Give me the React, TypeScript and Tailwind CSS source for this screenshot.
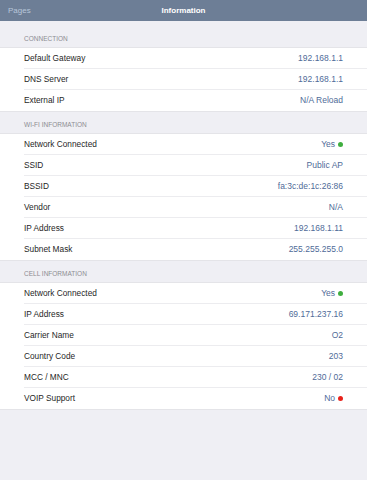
const sections = [
    {
        title: "CONNECTION",
        header: "h-[27px]",
        rows: [
            {label: "Default Gateway", value: "192.168.1.1"},
            {label: "DNS Server", value: "192.168.1.1"},
            {label: "External IP", value: "N/A Reload"},
        ],
    },
    {
        title: "WI-FI INFORMATION",
        header: "h-[22px]",
        rows: [
            {label: "Network Connected", value: "Yes", dot: "green"},
            {label: "SSID", value: "Public AP"},
            {label: "BSSID", value: "fa:3c:de:1c:26:86"},
            {label: "Vendor", value: "N/A"},
            {label: "IP Address", value: "192.168.1.11"},
            {label: "Subnet Mask", value: "255.255.255.0"},
        ],
    },
    {
        title: "CELL INFORMATION",
        header: "h-[22px]",
        rows: [
            {label: "Network Connected", value: "Yes", dot: "green"},
            {label: "IP Address", value: "69.171.237.16"},
            {label: "Carrier Name", value: "O2"},
            {label: "Country Code", value: "203"},
            {label: "MCC / MNC", value: "230 / 02"},
            {label: "VOIP Support", value: "No", dot: "red"},
        ],
    },
];

export default function App() {
    return (
        <div className="w-[367px] h-[480px] bg-[#efeff4] font-['Liberation_Sans',Arial,sans-serif] overflow-hidden">
            <nav className="h-[21px] bg-[#6d7e96] flex items-center relative">
                <span className="pl-2 text-[8px] text-[#b8c6da]">Pages</span>
                <span className="absolute left-0 right-0 text-center text-[8px] font-bold text-white">Information</span>
            </nav>

            {sections.map((section) => (
                <section key={section.title}>
                    <div className={`${section.header} flex items-end pl-6 pb-[3px] border-b border-[#e4e4e8]`}>
                        <span className="text-[6.5px] text-[#8d8d92]">{section.title}</span>
                    </div>
                    <div className="bg-white border-b border-[#e4e4e8]">
                        {section.rows.map((row, i) => (
                            <div key={i} className="pl-6">
                                <div className={`h-[21px] flex items-center justify-between pr-6 ${i < section.rows.length - 1 ? "border-b border-[#ececef]" : ""}`}>
                                    <span className="text-[8.3px] text-[#1f1f1f]">{row.label}</span>
                                    <span className="flex items-center gap-[3px] text-[8.5px] text-[#4f6b98]">
                                        {row.value}
                                        {row.dot && (
                                            <span className={`w-[5px] h-[5px] rounded-full ${row.dot === "green" ? "bg-[#3fae3f]" : "bg-[#e8221b]"}`}/>
                                        )}
                                    </span>
                                </div>
                            </div>
                        ))}
                    </div>
                </section>
            ))}
        </div>
    )
}
